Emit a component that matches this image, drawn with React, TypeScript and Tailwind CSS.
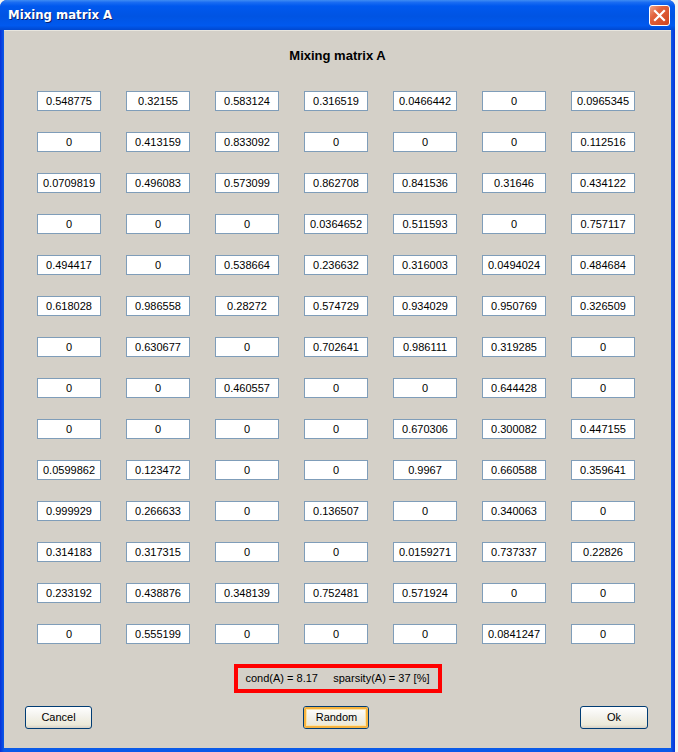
import React from "react";

const data: string[][] = [
  ["0.548775", "0.32155", "0.583124", "0.316519", "0.0466442", "0", "0.0965345"],
  ["0", "0.413159", "0.833092", "0", "0", "0", "0.112516"],
  ["0.0709819", "0.496083", "0.573099", "0.862708", "0.841536", "0.31646", "0.434122"],
  ["0", "0", "0", "0.0364652", "0.511593", "0", "0.757117"],
  ["0.494417", "0", "0.538664", "0.236632", "0.316003", "0.0494024", "0.484684"],
  ["0.618028", "0.986558", "0.28272", "0.574729", "0.934029", "0.950769", "0.326509"],
  ["0", "0.630677", "0", "0.702641", "0.986111", "0.319285", "0"],
  ["0", "0", "0.460557", "0", "0", "0.644428", "0"],
  ["0", "0", "0", "0", "0.670306", "0.300082", "0.447155"],
  ["0.0599862", "0.123472", "0", "0", "0.9967", "0.660588", "0.359641"],
  ["0.999929", "0.266633", "0", "0.136507", "0", "0.340063", "0"],
  ["0.314183", "0.317315", "0", "0", "0.0159271", "0.737337", "0.22826"],
  ["0.233192", "0.438876", "0.348139", "0.752481", "0.571924", "0", "0"],
  ["0", "0.555199", "0", "0", "0", "0.0841247", "0"],
];

function XpButton({ label, focused, w }: { label: string; focused?: boolean; w: string }) {
  return (
    <div
      className={`${w} h-[23px] rounded-[3px] border border-[#003c74] bg-[linear-gradient(180deg,#ffffff_0%,#f4f3ee_40%,#ece9d8_85%,#d6d0c5_100%)] flex items-center justify-center`}
    >
      <div
        className={`w-full h-full rounded-[2px] flex items-center justify-center ${
          focused ? "border-2 border-[#f6b33f] shadow-[inset_0_0_0_1px_#fde4a6]" : ""
        }`}
      >
        <span className="text-[11px] leading-none text-black" style={{ fontFamily: '"Liberation Sans", Arial, sans-serif' }}>
          {label}
        </span>
      </div>
    </div>
  );
}

export default function App() {
  return (
    <div className="w-[678px] h-[752px] bg-[#f4f4f0] overflow-hidden" style={{ fontFamily: '"Liberation Sans", Arial, sans-serif' }}>
      <div className="w-[675px] h-[752px] flex flex-col rounded-t-[7px] overflow-hidden bg-[#0842d8]">
        {/* Title bar */}
        <div className="h-[30px] shrink-0 flex items-center justify-between pl-[8px] pr-[5px] bg-[linear-gradient(180deg,#3f8cf3_0%,#1a6cf2_8%,#0058ee_20%,#0054e3_55%,#0059ef_85%,#0048d0_100%)]">
          <span className="text-white font-bold text-[13px] tracking-[0px] [text-shadow:1px_1px_0_#0a1f6e]" style={{ fontFamily: '"DejaVu Sans Condensed", "Liberation Sans Narrow", "Liberation Sans", sans-serif' }}>
            Mixing matrix A
          </span>
          <div className="w-[21px] h-[21px] rounded-[3px] border border-white bg-[linear-gradient(135deg,#f0a58a_0%,#e2623d_35%,#cf451d_100%)] flex items-center justify-center">
            <svg width="13" height="13" viewBox="0 0 13 13">
              <path d="M2 2 L11 11 M11 2 L2 11" stroke="white" strokeWidth="2.2" strokeLinecap="square" />
            </svg>
          </div>
        </div>
        {/* Body with borders */}
        <div className="flex-1 flex px-[4px] pb-[4px] bg-[linear-gradient(90deg,#0831d9_0px,#0a5ae8_4px,#0a5ae8_671px,#0831d9_675px)]">
          <div className="flex-1 bg-[#d4d0c8] flex flex-col border-t border-[#e8e6df]">
            <div className="pt-[16px] h-[35px] text-center text-[13px] font-bold leading-[18px] text-black">
              Mixing matrix A
            </div>
            <div className="mt-[25px] pl-[33px] grid grid-cols-[repeat(7,64px)] gap-x-[25px] gap-y-[21px]">
              {data.flatMap((row, r) =>
                row.map((v, c) => (
                  <div
                    key={`${r}-${c}`}
                    className="h-[20px] bg-white border border-[#7f9db9] flex items-center justify-center text-[11px] text-black leading-none"
                  >
                    {v}
                  </div>
                ))
              )}
            </div>
            <div className="mt-[20px] flex justify-center">
              <div className="w-[208px] h-[29px] border-[4px] border-[#ff0000] flex items-center justify-center text-[11px] text-black whitespace-pre">
                {"cond(A) = 8.17     sparsity(A) = 37 [%]"}
              </div>
            </div>
            <div className="mt-[13px] grid grid-cols-3 items-center pl-[21px] pr-[23px]">
              <div className="justify-self-start">
                <XpButton label="Cancel" w="w-[67px]" />
              </div>
              <div className="justify-self-center">
                <XpButton label="Random" focused w="w-[66px]" />
              </div>
              <div className="justify-self-end">
                <XpButton label="Ok" w="w-[68px]" />
              </div>
            </div>
          </div>
        </div>
      </div>
    </div>
  );
}
